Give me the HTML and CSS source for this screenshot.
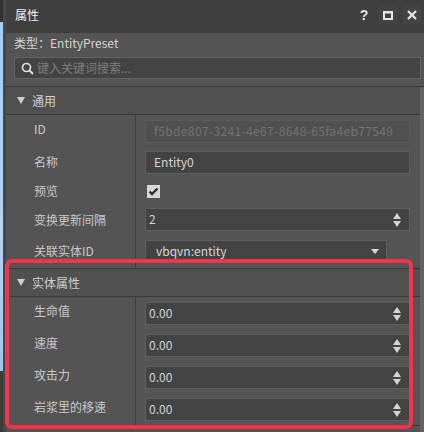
FILE: index.html
```html
<!DOCTYPE HTML>
<html>
<head>
<meta charset="utf-8">
<title>属性</title>
<link rel="stylesheet" href="styles.css">
</head>

<body>
<div class="desk">
	<div class="edge">
		<div class="edge-top"></div>
		<div class="edge-sky"></div>
		<div class="edge-bottom"></div>
	</div>
	<div class="win">
		<div class="title-bar">
			<span class="title">属性</span>
			<span class="tool help">?</span>
			<span class="tool">
				<svg width="11" height="9" viewBox="0 0 11 9"><path d="M0 0H10V9H0ZM2 2.500V7H8V2.500Z" fill="#e6e6e6" fill-rule="evenodd"/></svg>
			</span>
			<span class="tool">
				<svg width="10" height="10" viewBox="0 0 10 10"><path d="M1 1L9 9M9 1L1 9" stroke="#e6e6e6" stroke-width="2.200" fill="none"/></svg>
			</span>
		</div>
		<div class="info">
			<div class="type">类型&#xFF1A;EntityPreset</div>
			<div class="search">
				<svg width="13" height="13" viewBox="0 0 13 13"><circle cx="5.500" cy="5.500" r="4" stroke="#e0e0e0" stroke-width="1.700" fill="none"/><path d="M8.500 8.500L12 12" stroke="#e0e0e0" stroke-width="2" fill="none"/></svg>
				<span>键入关键词搜索...</span>
			</div>
		</div>
		<div class="scroll-area">
			<div class="body">
				<div class="group-head"><i class="arrow"></i>通用</div>
				<div class="row r-id">
					<div class="label">ID</div>
					<div class="cell"><div class="field off">f5bde807-3241-4e67-8648-65fa4eb77549</div></div>
				</div>
				<div class="row r-name">
					<div class="label">名称</div>
					<div class="cell"><div class="field">Entity0</div></div>
				</div>
				<div class="row r-check">
					<div class="label">预览</div>
					<div class="cell">
						<span class="check"><svg width="13" height="13" viewBox="0 0 13 13"><path d="M2.500 6.500L5 9L10.500 3.500" stroke="#2e2e2e" stroke-width="2.400" fill="none"/></svg></span>
					</div>
				</div>
				<div class="row r-step">
					<div class="label">变换更新间隔</div>
					<div class="cell"><div class="field num">2<i class="spin"></i></div></div>
				</div>
				<div class="row r-link">
					<div class="label">关联实体ID</div>
					<div class="cell"><div class="field pick">vbqvn:entity<i class="pick-arrow"></i></div></div>
				</div>
				<div class="group-head second"><i class="arrow"></i>实体属性</div>
				<div class="row"><div class="label">生命值</div><div class="cell"><div class="field num">0.00<i class="spin"></i></div></div></div>
				<div class="row"><div class="label">速度</div><div class="cell"><div class="field num">0.00<i class="spin"></i></div></div></div>
				<div class="row"><div class="label">攻击力</div><div class="cell"><div class="field num">0.00<i class="spin"></i></div></div></div>
				<div class="row"><div class="label">岩浆里的移速</div><div class="cell"><div class="field num">0.00<i class="spin"></i></div></div></div>
			</div>
			<div class="scrollbar"></div>
		</div>
	</div>
	<div class="mark"></div>
</div>
</body>
</html>
```

FILE: styles.css
```css
* {margin:0; padding:0; box-sizing:border-box;}
html,body {width:424px; height:432px; overflow:hidden; background:#3a3a3a;}
body {font:12px/16px "Noto Sans CJK SC","Liberation Sans",sans-serif; color:#c9c9c9;}
i {display:block; font-style:normal;}

.desk {position:relative; display:flex; width:424px; height:432px;}

.edge {display:flex; flex-direction:column; width:3px;}
.edge-top {height:22px; background:#333;}
.edge-sky {height:349px; background:linear-gradient(#a5cdf5,#b4d4f2 60%,#9fc4ea);}
.edge-bottom {flex:1; background:#3c3c3c;}

.win {width:421px; height:432px; background:#545454; border-left:3px solid #474747;}

.title-bar {display:flex; align-items:center; height:33px; background:#3f3f3f; padding:0 3px 3px 9px;}
.title {flex:1; font-size:12px; color:#f0f0f0;}
.tool {display:flex; align-items:center; justify-content:center; width:18px; height:18px; margin-left:6px; background:#434343; color:#e6e6e6;}
.help {background:none; font:bold 14px "Liberation Sans",sans-serif;}

.info {height:53px; padding:0 3px 0 8px; background:#545454;}
.type {height:19px; line-height:19px; color:#d4d4d4;}
.search {display:flex; align-items:center; gap:3px; height:22px; margin-top:5px; padding-left:6px; background:#434343; border:1px solid #626262; color:#7d7d7d;}

.scroll-area {display:flex; height:346px; border-top:1px solid #393939;}
.body {width:414px; height:339px; border-bottom:1px solid #393939;}
.scrollbar {width:4px; height:346px; background:#626262;}

.group-head {display:flex; align-items:center; height:28px; padding-left:11px; border-bottom:1px solid #393939; background:#505050; color:#d0d0d0;}
.group-head.second {height:29px; border-top:1px solid #393939;}
.arrow {width:0; height:0; margin-right:7px; border:4.500px solid transparent; border-top:7px solid #cfcfcf; border-bottom:0;}

.row {display:flex; height:32px;}
.label {width:130px; padding:0 0 4px 28px; align-self:stretch; display:flex; align-items:center; border-right:1px solid #3f3f3f;}
.cell {flex:1; display:flex; align-items:center; padding-left:9px;}

.r-name {height:31px;}
.r-name .label {padding-bottom:1px;}
.r-check {height:26px;}
.r-check .label {padding-bottom:0;}
.r-step {height:31px;}
.r-step .label {padding-bottom:0;}
.r-link {height:33px;}
.r-link .label {padding-bottom:1px;}

.field {position:relative; width:265px; height:23px; line-height:20px; padding-left:8px; background:#434343; border:1px solid #5e5e5e; color:#d6d6d6;}
.field.off {background:#505050; border-color:#5a5a5a; color:#727272; letter-spacing:.36px;}
.field.num {padding-left:3px; color:#cfd4d8;}
.field.pick {width:242px; padding-left:10px;}

.check {display:block; width:13px; height:13px; margin-left:2px; background:#d8d8d8;}
.check svg {display:block;}

.spin {position:absolute; right:8px; top:4px; width:8px; height:14px;}
.spin:before,.spin:after {content:""; position:absolute; left:0; width:0; height:0; border:4px solid transparent;}
.spin:before {top:0; border-bottom:6px solid #d4d4d4; border-top:0;}
.spin:after {bottom:0; border-top:6px solid #d4d4d4; border-bottom:0;}
.pick-arrow {position:absolute; right:7px; top:8px; width:0; height:0; border:4px solid transparent; border-top:5px solid #d8d8d8; border-bottom:0;}

/* red annotation box drawn over the screenshot */
.mark {position:absolute; left:5px; top:259px; width:408px; height:170px; border:4px solid #f5334a; border-radius:7px;}
```
